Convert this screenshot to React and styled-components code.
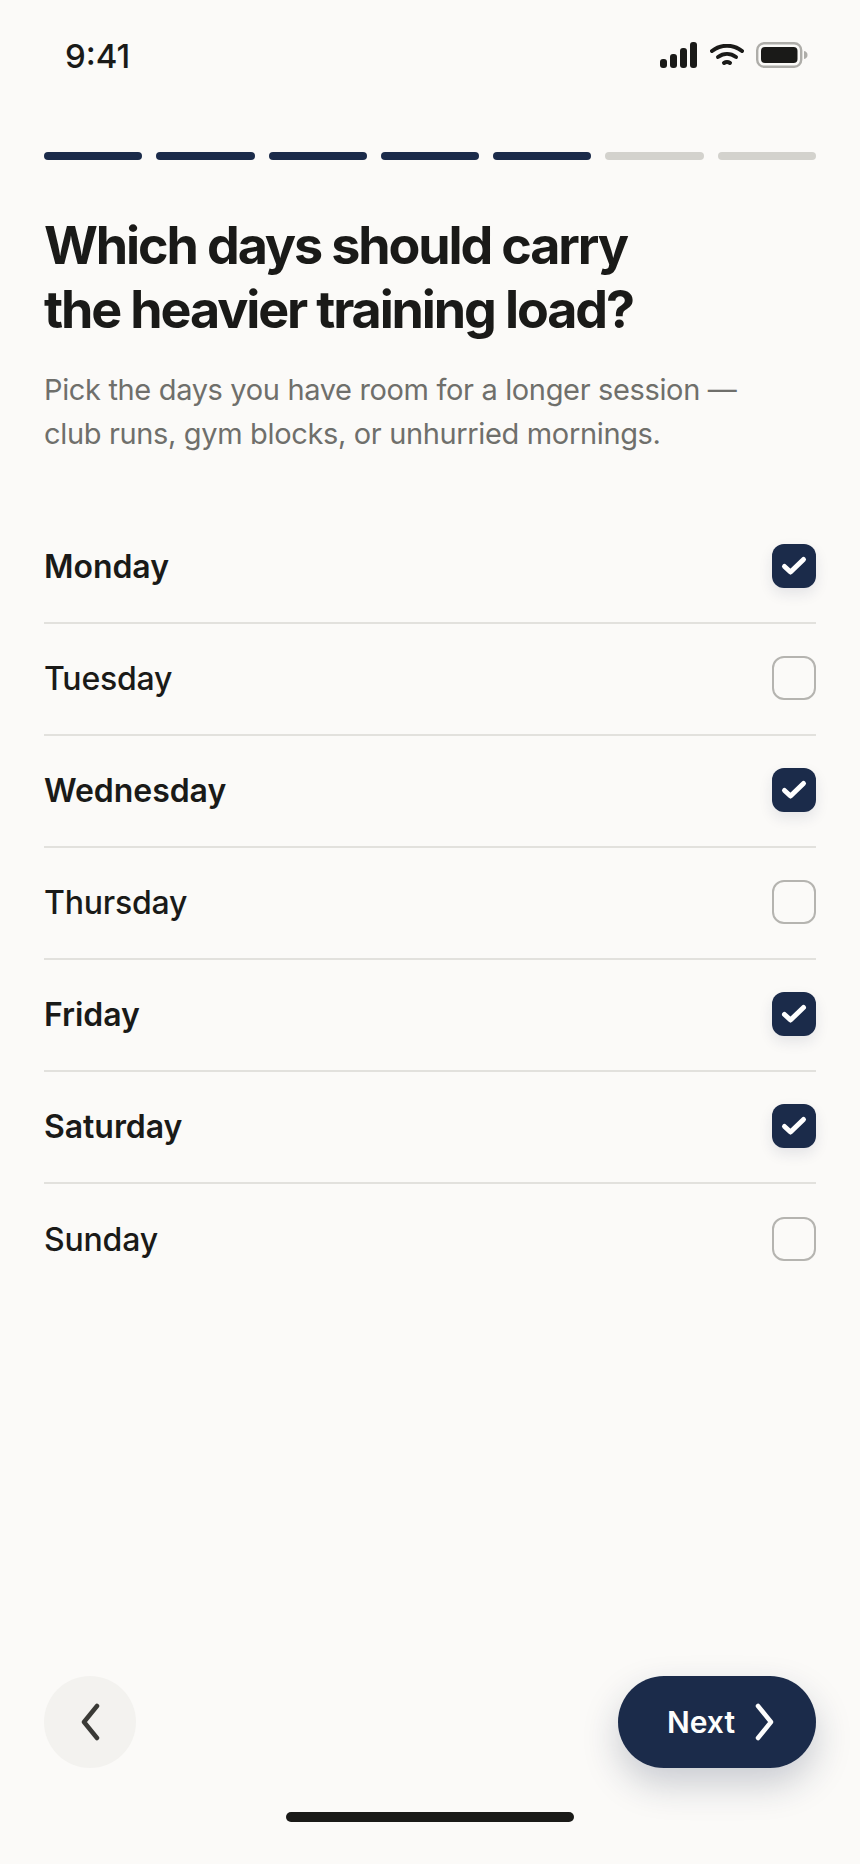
import React from "react";
import styled, { createGlobalStyle } from "styled-components";

const Global = createGlobalStyle`
  html, body { margin: 0; padding: 0; background: #fbfaf8; }
  * { box-sizing: border-box; }
`;

const Screen = styled.div`
  width: 860px;
  height: 1864px;
  background: #fbfaf8;
  color: #1a1a18;
  font-family: Inter, "Liberation Sans", sans-serif;
  display: flex;
  flex-direction: column;
  overflow: hidden;
`;

const StatusBar = styled.div`
  height: 56px;
  margin-top: 28px;
  padding: 0 52px 0 65px;
  display: flex;
  align-items: center;
  justify-content: space-between;
`;

const Time = styled.span`
  font-size: 33px;
  font-weight: 500;
  line-height: 1;
`;

const StatusIcons = styled.div`
  display: flex;
  align-items: center;
  gap: 12px;
  margin-bottom: 2px;
`;

const Progress = styled.div`
  display: flex;
  gap: 14px;
  margin: 68px 44px 0;
`;

const Segment = styled.div`
  flex: 1;
  height: 8px;
  border-radius: 4px;
  background: ${(p) => (p.$on ? "#1b2b4a" : "#d3d2cd")};
`;

const Title = styled.h1`
  margin: 54px 44px 0;
  font-size: 52px;
  line-height: 64px;
  font-weight: 700;
  letter-spacing: -2.12px;
`;

const Subtitle = styled.p`
  margin: 26px 44px 0;
  font-size: 29px;
  line-height: 44px;
  font-weight: 400;
  letter-spacing: -0.35px;
  color: #6f6f6b;
`;

const DayList = styled.div`
  margin: 56px 44px 0;
  display: flex;
  flex-direction: column;
`;

const Row = styled.div`
  height: 112px;
  padding-bottom: 2px;
  display: flex;
  align-items: center;
  justify-content: space-between;
  border-bottom: ${(p) => (p.$last ? "none" : "2px solid #e2e1dd")};
`;

const DayName = styled.span`
  font-size: 32px;
  font-weight: ${(p) => (p.$on ? 600 : 500)};
  letter-spacing: ${(p) => (p.$on ? "-0.05px" : "-0.2px")};
`;

const Box = styled.div`
  width: 44px;
  height: 44px;
  border-radius: 12px;
  display: flex;
  align-items: center;
  justify-content: center;
  background: ${(p) => (p.$on ? "#1b2b4a" : "transparent")};
  border: ${(p) => (p.$on ? "none" : "2px solid #b5b4b0")};
  box-shadow: ${(p) => (p.$on ? "0 6px 14px rgba(27,43,74,0.10)" : "none")};
`;

const Footer = styled.div`
  margin: auto 44px 0;
  display: flex;
  align-items: center;
  justify-content: space-between;
`;

const BackButton = styled.button`
  width: 92px;
  height: 92px;
  padding: 0;
  border: none;
  border-radius: 50%;
  background: #f3f2ef;
  display: flex;
  align-items: center;
  justify-content: center;
`;

const NextButton = styled.button`
  width: 198px;
  height: 92px;
  border: none;
  border-radius: 46px;
  padding: 0 0 0 10px;
  background: #1b2b4a;
  color: #fdfdfc;
  font-family: inherit;
  font-size: 30px;
  font-weight: 600;
  display: flex;
  align-items: center;
  justify-content: center;
  gap: 18px;
  box-shadow: 0 16px 36px rgba(27,43,74,0.22);
`;

const HomeBar = styled.div`
  width: 288px;
  height: 10px;
  border-radius: 5px;
  background: #1a1a18;
  margin: 44px auto 42px;
`;

const Check = () => (
  <svg width="28" height="28" viewBox="0 0 28 28" fill="none">
    <path d="M4.500 14.500l6 5.500L23.500 7.500" stroke="#fff" strokeWidth="5" strokeLinecap="round" strokeLinejoin="round" />
  </svg>
);

const Chevron = ({ dir, color }) => (
  <svg width="24" height="38" viewBox="0 0 24 38" fill="none">
    <path
      d={dir === "left" ? "M19 3L6 19l13 16" : "M5 3l13 16L5 35"}
      stroke={color}
      strokeWidth="4.500"
      strokeLinecap="round"
      strokeLinejoin="round"
    />
  </svg>
);

const days = [
  ["Monday", true],
  ["Tuesday", false],
  ["Wednesday", true],
  ["Thursday", false],
  ["Friday", true],
  ["Saturday", true],
  ["Sunday", false],
];

export default function App() {
  return (
    <Screen>
      <Global />
      <StatusBar>
        <Time>9:41</Time>
        <StatusIcons>
          <svg width="38" height="26" viewBox="0 0 38 26" fill="#1a1a18">
            <rect x="0" y="17" width="7" height="9" rx="3" />
            <rect x="10" y="12" width="7" height="14" rx="3" />
            <rect x="20" y="6" width="7" height="20" rx="3" />
            <rect x="30" y="0" width="7" height="26" rx="3" />
          </svg>
          <svg width="34" height="22" viewBox="0 0 34 22" fill="none" stroke="#1a1a18" strokeWidth="4" strokeLinecap="round">
            <path d="M2 7c9-7 21-7 30 0" />
            <path d="M8 13c5.500-4 12.500-4 18 0" />
            <path d="M14 19c1.800-1.200 4.200-1.200 6 0" />
          </svg>
          <svg width="52" height="26" viewBox="0 0 52 26">
            <rect x="1.200" y="1.200" width="44" height="23.600" rx="7" fill="none" stroke="#aeada9" strokeWidth="2.400" />
            <rect x="5" y="5" width="36.500" height="16" rx="4" fill="#1a1a18" />
            <path d="M48 9c2.500.6 3.500 2 3.500 4s-1 3.400-3.500 4z" fill="#aeada9" />
          </svg>
        </StatusIcons>
      </StatusBar>
      <Progress>
        {[1, 1, 1, 1, 1, 0, 0].map((v, i) => (
          <Segment key={i} $on={!!v} />
        ))}
      </Progress>
      <Title>
        Which days should carry
        <br />
        the heavier training load?
      </Title>
      <Subtitle>
        Pick the days you have room for a longer session —
        <br />
        club runs, gym blocks, or unhurried mornings.
      </Subtitle>
      <DayList>
        {days.map(([name, on], i) => (
          <Row key={name} $last={i === days.length - 1}>
            <DayName $on={on}>{name}</DayName>
            <Box $on={on}>{on && <Check />}</Box>
          </Row>
        ))}
      </DayList>
      <Footer>
        <BackButton aria-label="Back">
          <Chevron dir="left" color="#3a3a36" />
        </BackButton>
        <NextButton>
          Next
          <Chevron dir="right" color="#fdfdfc" />
        </NextButton>
      </Footer>
      <HomeBar />
    </Screen>
  );
}
